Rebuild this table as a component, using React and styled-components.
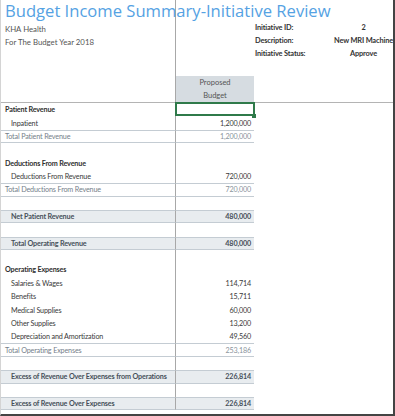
import React from 'react';
import styled, { createGlobalStyle } from 'styled-components';

const GlobalStyle = createGlobalStyle`
  html, body {
    margin: 0;
    padding: 0;
    background: #fff;
  }
  body {
    font-family: Lato, "Open Sans", sans-serif;
  }
`;

const ROW_H = '13.36px';

// Sheet frame
const Sheet = styled.div`
  width: 395px;
  height: 416px;
  box-sizing: border-box;
  border-left: 1px solid #d4d4d4;
  border-right: 2px solid #444;
  border-bottom: 2px solid #444;
  overflow: hidden;
  background: #fff;
`;

const Head = styled.div`
  display: grid;
  grid-template-columns: 175px 78px 1fr;
  height: 103px;
  box-sizing: border-box;
  border-bottom: 1px solid #b4b4b4;
`;

const HeadLeft = styled.div`
  box-sizing: border-box;
  border-right: 1px solid #a8a8a8;
  padding-left: 4px;
`;

const Title = styled.div`
  font-family: "Open Sans", sans-serif;
  font-size: 16.6px;
  line-height: 22.6px;
  color: #55a2e3;
  white-space: nowrap;
`;

const Sub = styled.div`
  font-size: 7.8px;
  line-height: 13.4px;
  color: #555;
  white-space: nowrap;
`;

const BudgetHead = styled.div`
  display: flex;
  align-items: flex-end;
`;

const ColumnTitle = styled.div`
  width: 100%;
  height: 26px;
  background: #d6dce1;
  color: #555;
  font-size: 7.5px;
  line-height: 13px;
  text-align: center;
`;

const Info = styled.div`
  display: grid;
  grid-template-columns: 82px 53px;
  grid-auto-rows: 13.36px;
  align-content: start;
  padding-top: 22.6px;
  padding-left: 1px;
  font-size: 7.4px;
  font-weight: 700;
  letter-spacing: -0.15px;
  color: #333;
  white-space: nowrap;
`;

const InfoValue = styled.div`
  display: flex;
  justify-content: center;
`;

// Body rows
const Row = styled.div`
  display: grid;
  grid-template-columns: 175px 78px 1fr;
  height: ${ROW_H};
`;

const styleFor = {
  header: { weight: 700, color: '#2f2f2f', indent: 4 },
  item: { weight: 400, color: '#3a3a3a', indent: 10 },
  total: { weight: 400, color: '#75808a', indent: 4 },
  summary: { weight: 700, color: '#47505a', indent: 10 },
  blank: { weight: 400, color: '#333', indent: 4 },
};

const Cell = styled.div`
  position: relative;
  box-sizing: border-box;
  display: flex;
  align-items: center;
  font-size: 7.2px;
  letter-spacing: -0.15px;
  white-space: nowrap;
  font-weight: ${(p) => styleFor[p.$kind].weight};
  color: ${(p) => styleFor[p.$kind].color};
  background: ${(p) => (p.$kind === 'summary' ? '#e8ecef' : 'transparent')};
  border-top: ${(p) => (p.$kind === 'total' || p.$kind === 'summary' ? '1px solid #c4ccd3' : 'none')};
  border-bottom: ${(p) => (p.$kind === 'total' || p.$kind === 'summary' ? '1px solid #c4ccd3' : 'none')};
`;

const LabelCell = styled(Cell)`
  border-right: 1px solid #a8a8a8;
  padding-left: ${(p) => styleFor[p.$kind].indent}px;
`;

const ValueCell = styled(Cell)`
  justify-content: flex-end;
  padding-right: 3px;
  color: ${(p) => (p.$kind === 'total' ? '#8a949c' : styleFor[p.$kind].color)};

  ${(p) =>
    p.$selected &&
    `
    &::after {
      content: '';
      position: absolute;
      left: -1px;
      right: -1px;
      top: -1px;
      bottom: 0;
      border: 2px solid #2f7a4a;
    }
    &::before {
      content: '';
      position: absolute;
      right: -2px;
      bottom: -2px;
      width: 4px;
      height: 4px;
      background: #2f7a4a;
      z-index: 1;
    }
  `}
`;

const rows = [
  { kind: 'header', label: 'Patient Revenue', selected: true },
  { kind: 'item', label: 'Inpatient', value: '1,200,000' },
  { kind: 'total', label: 'Total Patient Revenue', value: '1,200,000' },
  { kind: 'blank' },
  { kind: 'header', label: 'Deductions From Revenue' },
  { kind: 'item', label: 'Deductions From Revenue', value: '720,000' },
  { kind: 'total', label: 'Total Deductions From Revenue', value: '720,000' },
  { kind: 'blank' },
  { kind: 'summary', label: 'Net Patient Revenue', value: '480,000' },
  { kind: 'blank' },
  { kind: 'summary', label: 'Total Operating Revenue', value: '480,000' },
  { kind: 'blank' },
  { kind: 'header', label: 'Operating Expenses' },
  { kind: 'item', label: 'Salaries & Wages', value: '114,714' },
  { kind: 'item', label: 'Benefits', value: '15,711' },
  { kind: 'item', label: 'Medical Supplies', value: '60,000' },
  { kind: 'item', label: 'Other Supplies', value: '13,200' },
  { kind: 'item', label: 'Depreciation and Amortization', value: '49,560' },
  { kind: 'total', label: 'Total Operating Expenses', value: '253,186' },
  { kind: 'blank' },
  { kind: 'summary', label: 'Excess of Revenue Over Expenses from Operations', value: '226,814' },
  { kind: 'blank' },
  { kind: 'summary', label: 'Excess of Revenue Over Expenses', value: '226,814' },
];

export default function App() {
  return (
    <>
      <GlobalStyle />
      <Sheet>
        <Head>
          <HeadLeft>
            <Title>Budget Income Summary-Initiative Review</Title>
            <Sub>KHA Health</Sub>
            <Sub>For The Budget Year 2018</Sub>
          </HeadLeft>
          <BudgetHead>
            <ColumnTitle>
              Proposed
              <br />
              Budget
            </ColumnTitle>
          </BudgetHead>
          <Info>
            <div>Initiative ID:</div>
            <InfoValue>2</InfoValue>
            <div>Description:</div>
            <InfoValue>New MRI Machine</InfoValue>
            <div>Initiative Status:</div>
            <InfoValue>Approve</InfoValue>
          </Info>
        </Head>
        {rows.map((r, i) => (
          <Row key={i}>
            <LabelCell $kind={r.kind}>{r.label}</LabelCell>
            <ValueCell $kind={r.kind} $selected={r.selected}>
              {r.value}
            </ValueCell>
            <div />
          </Row>
        ))}
      </Sheet>
    </>
  );
}
